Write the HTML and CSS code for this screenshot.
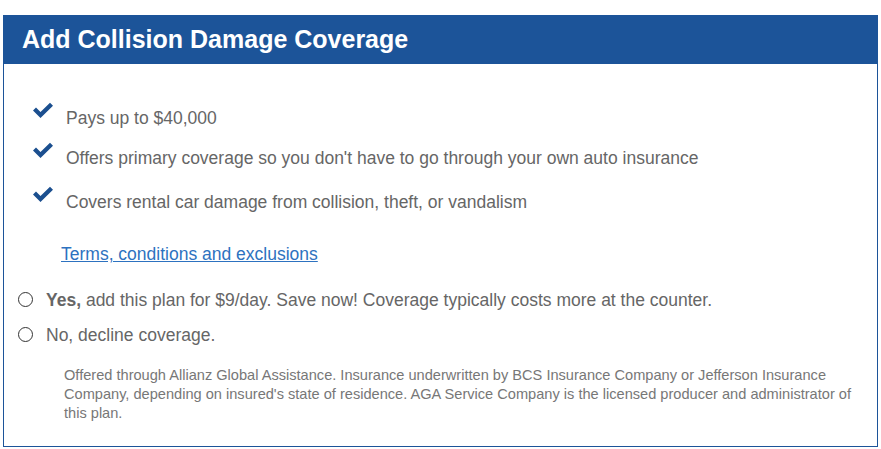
FILE: index.html
```html
<!DOCTYPE html>
<html>
<head>
<meta charset="utf-8">
<link rel="stylesheet" href="styles.css">
</head>
<body>
<div class="panel">
  <div class="panel-head">Add Collision Damage Coverage</div>
  <div class="panel-body">
    <ul class="benefits">
      <li><svg class="check" viewBox="0 0 22 17"><path d="M1 8.5 L4 5.5 L8.5 10 L18 0.8 L21 3.8 L8.5 16 Z" fill="#1b4f8f"/></svg><span>Pays up to $40,000</span></li>
      <li><svg class="check" viewBox="0 0 22 17"><path d="M1 8.5 L4 5.5 L8.5 10 L18 0.8 L21 3.8 L8.5 16 Z" fill="#1b4f8f"/></svg><span>Offers primary coverage so you don't have to go through your own auto insurance</span></li>
      <li><svg class="check" viewBox="0 0 22 17"><path d="M1 8.5 L4 5.5 L8.5 10 L18 0.8 L21 3.8 L8.5 16 Z" fill="#1b4f8f"/></svg><span>Covers rental car damage from collision, theft, or vandalism</span></li>
    </ul>
    <a class="terms" href="#">Terms, conditions and exclusions</a>
    <div class="options">
      <label class="option"><span class="radio"></span><span><b>Yes,</b> add this plan for $9/day. Save now! Coverage typically costs more at the counter.</span></label>
      <label class="option"><span class="radio"></span><span>No, decline coverage.</span></label>
    </div>
    <p class="fine">Offered through Allianz Global Assistance. Insurance underwritten by BCS Insurance Company or Jefferson Insurance Company, depending on insured's state of residence. AGA Service Company is the licensed producer and administrator of this plan.</p>
  </div>
</div>
</body>
</html>
```
FILE: styles.css
```css
html, body { margin: 0; padding: 0; background: #fff; }
body { padding: 15px 3px 0 3px; font-family: "Liberation Sans", Arial, sans-serif; }
.panel {
  border: 1px solid #1c5499;
  height: 432px;
  box-sizing: border-box;
}
.panel-head {
  background: #1c5499;
  color: #fff;
  font-weight: bold;
  font-size: 25px;
  height: 49px;
  line-height: 49px;
  padding-left: 19px;
  margin: -1px -1px 0 -1px;
}
.panel-body { padding: 0; }
.benefits {
  list-style: none;
  margin: 0;
  padding: 44px 0 0 28px;
}
.benefits li {
  display: flex;
  align-items: flex-start;
  font-size: 17.5px;
  color: #666;
  height: 20px;
  line-height: 20px;
  margin-bottom: 20px;
}
.benefits li:nth-child(2) { margin-bottom: 24px; }
.check { width: 22px; height: 17px; margin: -6px 12px 0 0; flex: none; }
.terms {
  display: inline-block;
  margin: 12px 0 0 57px;
  font-size: 17.5px;
  color: #2d72c0;
  text-decoration: underline;
  line-height: 20px;
}
.options { margin-top: 26px; padding-left: 14px; }
.option {
  display: flex;
  align-items: center;
  font-size: 17.5px;
  color: #666;
  height: 20px;
  line-height: 20px;
  margin-bottom: 15px;
}
.option b { color: #666; }
.radio {
  width: 13px; height: 13px;
  border: 1px solid #333;
  border-radius: 50%;
  margin: -2px 13px 0 0;
  flex: none;
}
.fine {
  margin: 21px 18px 0 60px;
  font-size: 14.6px;
  line-height: 19px;
  color: #777;
}
```
